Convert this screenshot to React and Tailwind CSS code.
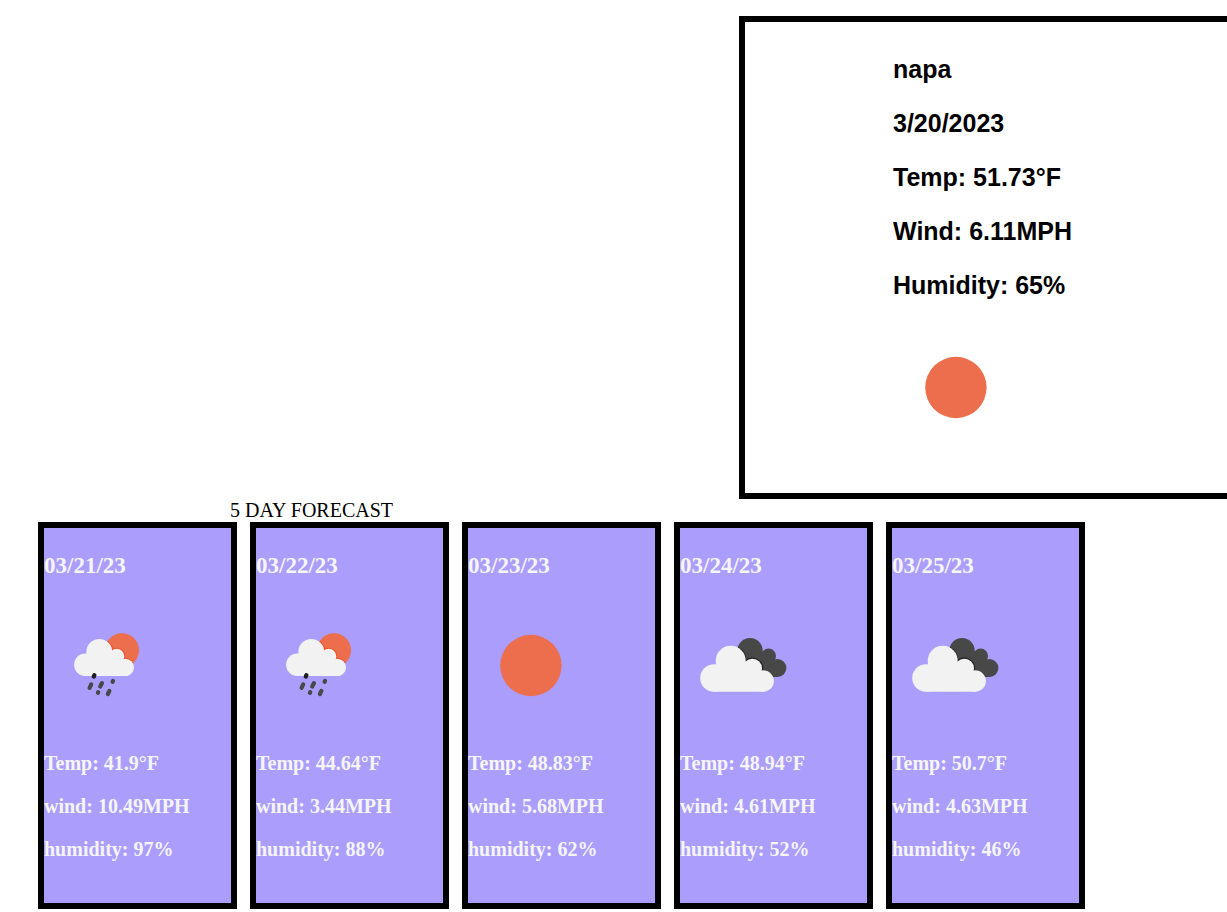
const current = {
  city: 'napa',
  date: '3/20/2023',
  temp: '51.73',
  wind: '6.11',
  humidity: '65',
};

const forecast = [
  { date: '03/21/23', icon: 'rain', temp: '41.9', wind: '10.49', humidity: '97' },
  { date: '03/22/23', icon: 'rain', temp: '44.64', wind: '3.44', humidity: '88' },
  { date: '03/23/23', icon: 'sun', temp: '48.83', wind: '5.68', humidity: '62' },
  { date: '03/24/23', icon: 'clouds', temp: '48.94', wind: '4.61', humidity: '52' },
  { date: '03/25/23', icon: 'clouds', temp: '50.7', wind: '4.63', humidity: '46' },
];

function Sun() {
  return <circle cx="62.9" cy="62.5" r="30.7" fill="#ec6e4c" />;
}

function RainCloud() {
  return (
    <>
      <circle cx="78" cy="47.3" r="17" fill="#ec6e4c" />
      <clipPath id="rain-sun">
        <circle cx="78" cy="47.3" r="17" />
      </clipPath>
      <g clipPath="url(#rain-sun)" fill="#ea5228">
        <circle cx="55.3" cy="49" r="14" />
        <circle cx="72.7" cy="53.4" r="8.6" />
        <circle cx="81.3" cy="64.5" r="9.7" />
      </g>
      <g fill="#f2f2f2">
        <circle cx="41.4" cy="61.8" r="11.3" />
        <circle cx="55.3" cy="49" r="13" />
        <circle cx="72.7" cy="53.4" r="7.6" />
        <circle cx="81.3" cy="64.4" r="8.7" />
        <path d="M41 73.1V60L50 54L72 52L84 62V73.1Z" />
      </g>
      <g stroke="#484849" strokeWidth="4.2" strokeLinecap="round">
        <path d="M47.2 81.4L45.6 84.8" />
        <path d="M58 80.1L56.2 83.5" />
        <path d="M69 78L68.6 78.8" />
        <path d="M54.2 89.1L53.9 89.8" />
        <path d="M65.4 87.9L63.9 91" />
        <path d="M50.4 72.1L49.8 73.6" stroke="#1d1d1d" />
      </g>
    </>
  );
}

function Clouds() {
  return (
    <>
      <g fill="#484849">
        <circle cx="70" cy="47.7" r="12.7" />
        <circle cx="88.6" cy="53" r="7.4" />
        <circle cx="97.4" cy="65" r="9" />
        <path d="M65 50L88 48L98 60V74H84L65 62Z" />
      </g>
      <clipPath id="back-cloud">
        <path d="M62 35H107V74H62Z" />
      </clipPath>
      <g fill="none" stroke="#262626" strokeWidth="1.6">
        <path d="M57.9 44.6A15 15 0 0 1 65.5 57.7A10.2 10.2 0 0 1 82.2 67.5A10.7 10.7 0 0 1 90 70.8L92 73.5" />
      </g>
      <g fill="#f2f2f2">
        <circle cx="34" cy="75" r="13.8" />
        <circle cx="50.7" cy="57.8" r="15" />
        <circle cx="72.4" cy="65.3" r="9.6" />
        <circle cx="83.2" cy="78" r="10.7" />
        <path d="M34 88.8V72L44 64L72 62L84 74V88.8Z" />
      </g>
    </>
  );
}

const drawings = { sun: Sun, rain: RainCloud, clouds: Clouds };

function WeatherIcon({ name }) {
  const Drawing = drawings[name];
  return (
    <svg viewBox="0 0 125 125" className="block size-[125px]" aria-hidden="true">
      <Drawing />
    </svg>
  );
}

function CurrentWeather() {
  return (
    <section className="ml-auto w-[488px] max-w-full border-6 border-r-0 border-black pt-[33px] pb-[43px] pl-[148px] font-['Liberation_Sans',Arial,sans-serif] text-[25px] leading-[29px] font-bold">
      <div className="flex flex-col gap-[25px]">
        <h1>{current.city}</h1>
        <p>{current.date}</p>
        <p>Temp: {current.temp}°F</p>
        <p>Wind: {current.wind}MPH</p>
        <p>Humidity: {current.humidity}%</p>
        <WeatherIcon name="sun" />
      </div>
    </section>
  );
}

function ForecastCard({ day }) {
  return (
    <li className="flex min-w-0 flex-col gap-6 border-6 border-black bg-[#ab9dfc] pt-6 pb-[42px] font-bold text-[#f5f5f5]">
      <h3 className="text-[23px] leading-[27px]">{day.date}</h3>
      <WeatherIcon name={day.icon} />
      <div className="flex flex-col gap-5">
        <p>Temp: {day.temp}°F</p>
        <p>wind: {day.wind}MPH</p>
        <p>humidity: {day.humidity}%</p>
      </div>
    </li>
  );
}

export default function App() {
  return (
    <main className="bg-white pt-4 font-['Liberation_Serif','Times_New_Roman',serif] text-[20px] leading-[23px] text-black">
      <CurrentWeather />
      <section className="mr-[142px] ml-[38px]">
        <h2 className="pl-48">5 DAY FORECAST</h2>
        <ul className="grid grid-cols-5 gap-[13px]">
          {forecast.map((day) => (
            <ForecastCard key={day.date} day={day} />
          ))}
        </ul>
      </section>
    </main>
  );
}
